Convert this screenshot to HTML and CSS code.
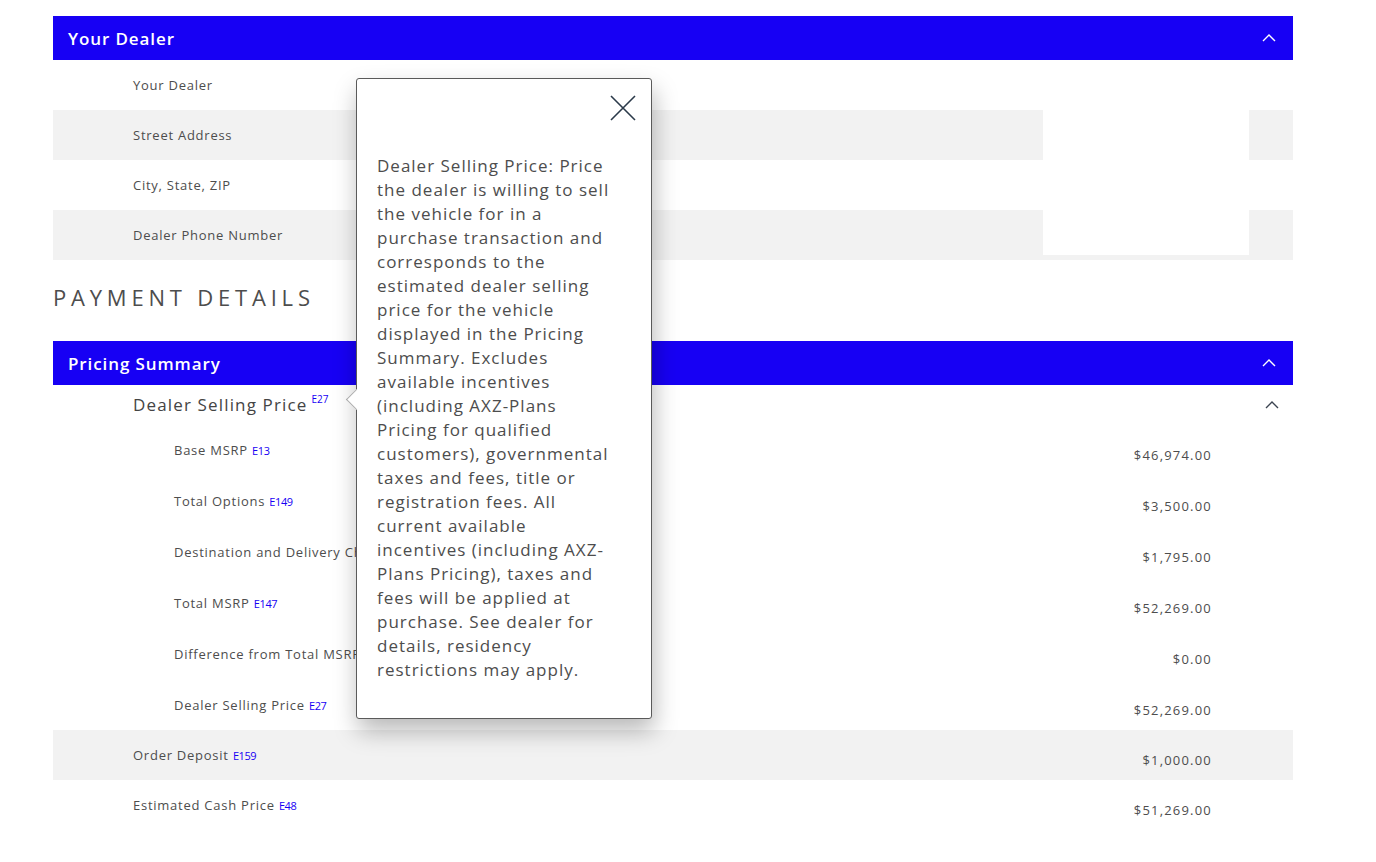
FILE: index.html
```html
<!DOCTYPE html>
<html>
<head>
<meta charset="utf-8">
<link rel="stylesheet" href="styles.css">
</head>
<body>
<div class="page">
  <section class="panel">
    <div class="panel-head"><span>Your Dealer</span><svg class="chev" width="14" height="8" viewBox="0 0 14 8"><path d="M1 7 L7 1 L13 7" fill="none" stroke="#fff" stroke-width="1.4"/></svg></div>
    <div class="row"><span class="label">Your Dealer</span></div>
    <div class="row gray"><span class="label">Street Address</span><span class="blank"></span></div>
    <div class="row"><span class="label">City, State, ZIP</span></div>
    <div class="row gray"><span class="label">Dealer Phone Number</span><span class="blank short"></span></div>
  </section>

  <h2 class="section-title">PAYMENT DETAILS</h2>

  <section class="panel">
    <div class="panel-head"><span>Pricing Summary</span><svg class="chev" width="14" height="8" viewBox="0 0 14 8"><path d="M1 7 L7 1 L13 7" fill="none" stroke="#fff" stroke-width="1.4"/></svg></div>
    <div class="group-head"><span class="group-label">Dealer Selling Price<sup class="ref">E27</sup></span><svg class="chev dark" width="14" height="8" viewBox="0 0 14 8"><path d="M1 7 L7 1 L13 7" fill="none" stroke="#3b4350" stroke-width="1.4"/></svg></div>
    <div class="sub"><span class="sublabel">Base MSRP <span class="e">E13</span></span><span class="val">$46,974.00</span></div>
    <div class="sub"><span class="sublabel">Total Options <span class="e">E149</span></span><span class="val">$3,500.00</span></div>
    <div class="sub"><span class="sublabel">Destination and Delivery Charge</span><span class="val">$1,795.00</span></div>
    <div class="sub"><span class="sublabel">Total MSRP <span class="e">E147</span></span><span class="val">$52,269.00</span></div>
    <div class="sub"><span class="sublabel">Difference from Total MSRP</span><span class="val">$0.00</span></div>
    <div class="sub"><span class="sublabel">Dealer Selling Price <span class="e">E27</span></span><span class="val">$52,269.00</span></div>
    <div class="row gray"><span class="label">Order Deposit <span class="e">E159</span></span><span class="val">$1,000.00</span></div>
    <div class="row"><span class="label">Estimated Cash Price <span class="e">E48</span></span><span class="val">$51,269.00</span></div>
  </section>

  <div class="tooltip">
    <span class="arrow"></span>
    <div class="tip-top">
      <svg class="close" width="26" height="26" viewBox="0 0 26 26"><path d="M1 1 L25 25 M25 1 L1 25" fill="none" stroke="#2b3a4a" stroke-width="1.6"/></svg>
    </div>
    <p class="tip-text">Dealer Selling Price: Price<br>the dealer is willing to sell<br>the vehicle for in a<br>purchase transaction and<br>corresponds to the<br>estimated dealer selling<br>price for the vehicle<br>displayed in the Pricing<br>Summary. Excludes<br>available incentives<br>(including AXZ-Plans<br>Pricing for qualified<br>customers), governmental<br>taxes and fees, title or<br>registration fees. All<br>current available<br>incentives (including AXZ-<br>Plans Pricing), taxes and<br>fees will be applied at<br>purchase. See dealer for<br>details, residency<br>restrictions may apply.</p>
  </div>
</div>
</body>
</html>
```

FILE: styles.css
```css
* { box-sizing: border-box; }
html, body { margin: 0; padding: 0; background: #fff; }
body {
  font-family: "Open Sans", "Noto Sans", sans-serif;
  color: #4d4d4d;
}
.page {
  position: relative;
  width: 1376px;
  padding: 16px 83px 40px 53px;
}
.panel { width: 1240px; }
.panel-head {
  height: 44px;
  background: #1700f4;
  color: #fff;
  display: flex;
  align-items: center;
  justify-content: space-between;
  padding: 0 17px 0 15px;
  font-size: 17px;
  font-weight: 600;
  letter-spacing: 0.9px;
}
.chev { display: block; }
.row {
  height: 50px;
  display: flex;
  align-items: center;
  justify-content: space-between;
  padding-left: 80px;
  padding-right: 81px;
}
.row.gray { background: #f2f2f2; }
.label, .sublabel {
  font-size: 13px;
  letter-spacing: 0.75px;
  color: #4d4d4d;
}
.blank {
  align-self: flex-start;
  width: 206px;
  height: 50px;
  background: #fff;
  margin-right: -37px;
}
.blank.short { height: 45px; }
.section-title {
  margin: 22px 0 29px;
  font-size: 22px;
  line-height: 30px;
  font-weight: 400;
  letter-spacing: 4.8px;
  color: #4d4d4d;
}
.group-head {
  height: 39px;
  display: flex;
  align-items: center;
  justify-content: space-between;
  padding-left: 80px;
  padding-right: 14px;
}
.group-label {
  font-size: 17px;
  font-weight: 500;
  letter-spacing: 1.15px;
  color: #444;
}
.ref {
  font-size: 10px;
  color: #1700f4;
  margin-left: 4px;
  vertical-align: 8px;
  line-height: 0;
  letter-spacing: 0;
}
.sub {
  height: 51px;
  display: flex;
  align-items: center;
  justify-content: space-between;
  padding-left: 121px;
  padding-right: 81px;
}
.e {
  font-size: 11px;
  color: #1700f4;
  letter-spacing: -0.4px;
}
.val {
  font-size: 13px;
  letter-spacing: 1.2px;
  color: #4d4d4d;
  padding-top: 10px;
}
.tooltip {
  position: absolute;
  left: 356px;
  top: 78px;
  width: 296px;
  height: 641px;
  background: #fff;
  border: 1px solid #5a5a5a;
  border-radius: 3px;
  box-shadow: 2px 12px 24px rgba(0,0,0,0.28);
  padding: 16px 15px 0 20px;
  z-index: 5;
}
.arrow {
  position: absolute;
  left: -8px;
  top: 313px;
  width: 15px;
  height: 15px;
  background: #fff;
  border-left: 1px solid #aaa;
  border-bottom: 1px solid #aaa;
  transform: rotate(45deg);
}
.tip-top {
  display: flex;
  justify-content: flex-end;
  height: 26px;
}
.close { display: block; }
.tip-text {
  margin: 33px 0 0;
  font-size: 17px;
  line-height: 24px;
  letter-spacing: 1px;
  color: #4d4d4d;
  white-space: nowrap;
}
```
